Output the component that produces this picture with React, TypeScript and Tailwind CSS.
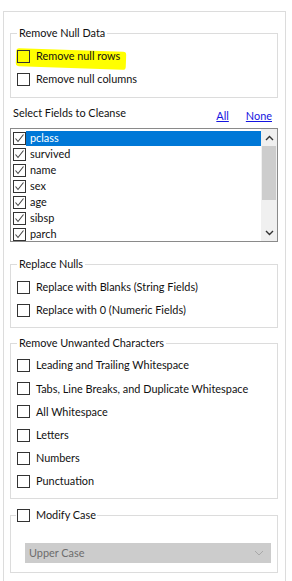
import type { ReactNode } from "react";

const fields = ["pclass", "survived", "name", "sex", "age", "sibsp", "parch"];

const unwanted = [
  "Leading and Trailing Whitespace",
  "Tabs, Line Breaks, and Duplicate Whitespace",
  "All Whitespace",
  "Letters",
  "Numbers",
  "Punctuation",
];

function Box({ checked = false }: { checked?: boolean }) {
  return (
    <span className="flex h-[13px] w-[13px] shrink-0 items-center justify-center border border-[#333333]">
      {checked && (
        <svg width="11" height="11" viewBox="0 0 11 11">
          <polyline points="1.5,5.5 4,8.5 9.5,1.5" fill="none" stroke="#444" strokeWidth="1.1" />
        </svg>
      )}
    </span>
  );
}

function Row({ label }: { label: string }) {
  return (
    <div className="flex h-[23px] items-center gap-[6px] pl-[6px]">
      <Box />
      <span>{label}</span>
    </div>
  );
}

function Group({ title, children, className = "" }: { title: ReactNode; children: ReactNode; className?: string }) {
  return (
    <fieldset className={`w-[268px] border border-[#dcdcdc] ${className}`}>
      <legend className="ml-[6px] px-[2px] leading-[16px]">{title}</legend>
      {children}
    </fieldset>
  );
}

function Chevron({ up }: { up?: boolean }) {
  return (
    <svg width="9" height="6" viewBox="0 0 9 6">
      <polyline
        points={up ? "1,5 4.5,1.5 8,5" : "1,1 4.5,4.5 8,1"}
        fill="none"
        stroke="#333"
        strokeWidth="1.4"
      />
    </svg>
  );
}

export default function App() {
  return (
    <div className="min-h-[581px] whitespace-nowrap bg-white pt-[11px] pl-[3px] text-[10.9px] text-[#111] [font-family:Lato,sans-serif]">
      <div className="h-[570px] w-[283px] border border-b-0 border-[#dcdcdc] pl-[6px] pt-[13px]">
        <Group title="Remove Null Data" className="pt-[4px] pb-[6px]">
          <div className="relative">
            <span className="absolute left-[5px] top-[5px] h-[18px] w-[110px] rotate-[2deg] rounded-[3px] bg-[#ffff00]" />
            <div className="relative flex h-[23px] items-center gap-[6px] pl-[6px]">
              <Box />
              <span>Remove null rows</span>
            </div>
          </div>
          <Row label="Remove null columns" />
        </Group>

        <div className="mt-[7px] flex h-[23px] w-[268px] items-start pl-[3px]">
          <span className="leading-[16px]">Select Fields to Cleanse</span>
          <span className="ml-auto mt-[3px] leading-[16px] text-[#1414e0] underline">All</span>
          <span className="ml-[17px] mr-[6px] mt-[3px] leading-[16px] text-[#1414e0] underline">None</span>
        </div>

        <div className="flex h-[114px] w-[268px] overflow-hidden border border-[#8a8a8a]">
          <div className="flex-1 pt-[1px] pl-[2px]">
            {fields.map((f, i) => (
              <div key={f} className="flex h-[16px] items-center">
                <Box checked />
                <span
                  className={`flex h-[15px] flex-1 items-center pl-[4px] ${i === 0 ? "bg-[#0078d7] text-white" : ""}`}
                >
                  {f}
                </span>
              </div>
            ))}
          </div>
          <div className="flex w-[16px] flex-col items-center bg-[#f0f0f0]">
            <div className="flex h-[17px] items-center justify-center">
              <Chevron up />
            </div>
            <div className="h-[54px] w-[14px] bg-[#cdcdcd]" />
            <div className="flex-1" />
            <div className="flex h-[17px] items-center justify-center">
              <Chevron />
            </div>
          </div>
        </div>

        <Group title="Replace Nulls" className="mt-[14px] pt-[4px] pb-[5px]">
          <Row label="Replace with Blanks (String Fields)" />
          <Row label="Replace with 0 (Numeric Fields)" />
        </Group>

        <Group title="Remove Unwanted Characters" className="mt-[7px] pt-[3px] pb-[5px]">
          {unwanted.map((u) => (
            <div key={u} className="flex h-[23.2px] items-center gap-[6px] pl-[6px]">
              <Box />
              <span>{u}</span>
            </div>
          ))}
        </Group>

        <fieldset className="mt-[8px] w-[268px] border border-[#dcdcdc] pb-[9px]">
          <legend className="ml-[5px] flex items-center gap-[6px] px-[1px] leading-[16px]">
            <Box />
            <span>Modify Case</span>
          </legend>
          <div className="ml-[14px] mt-[20px] flex h-[20px] w-[246px] items-center bg-[#cccccc] pl-[4px] pr-[7px] text-[#6d6d6d]">
            <span>Upper Case</span>
            <svg className="ml-auto" width="10" height="6" viewBox="0 0 10 6">
              <polyline points="1,1 5,5 9,1" fill="none" stroke="#a8a8a8" strokeWidth="1" />
            </svg>
          </div>
        </fieldset>
      </div>
    </div>
  );
}
